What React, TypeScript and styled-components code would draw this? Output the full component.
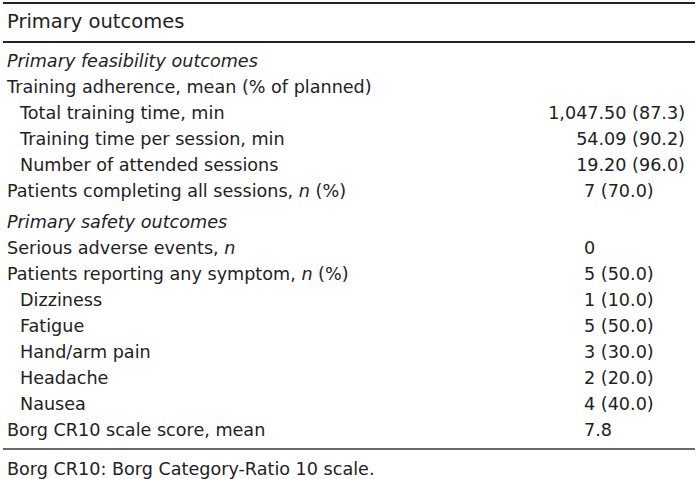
import React from "react";
import styled, { createGlobalStyle } from "styled-components";

const Global = createGlobalStyle`
  html, body { margin: 0; padding: 0; background: #ffffff; }
  body { font-family: Verdana, "DejaVu Sans", sans-serif; color: #222222; }
`;

const Table = styled.div`
  width: 692px;
  margin: 2px 0 0 3px;
  border-top: 2px solid #222222;
  font-size: 17.6px;
`;

const Header = styled.div`
  padding: 5px 0 6px 4px;
  font-size: 19.5px;
  line-height: 26px;
  border-bottom: 2px solid #222222;
`;

const Section = styled.div`
  padding-top: 5px;
`;

const Body = styled.div`
  padding-bottom: 5px;
  border-bottom: 2px solid #6a6a6a;
`;

const Row = styled.div`
  display: grid;
  grid-template-columns: 1fr 170px;
  padding-right: 10px;
  line-height: 26px;
  white-space: nowrap;
`;

const Label = styled.div<{ $indent?: boolean; $title?: boolean }>`
  padding-left: ${(p) => (p.$indent ? 17 : 4)}px;
  font-style: ${(p) => (p.$title ? "italic" : "normal")};
`;

const Value = styled.div<{ $right?: boolean }>`
  text-align: ${(p) => (p.$right ? "right" : "left")};
  padding-left: ${(p) => (p.$right ? 0 : 69)}px;
`;

const Footnote = styled.div`
  padding: 6px 0 0 4px;
  line-height: 26px;
`;

type R = { label: React.ReactNode; value?: string; indent?: boolean; right?: boolean };

const feas: R[] = [
  { label: "Training adherence, mean (% of planned)" },
  { label: "Total training time, min", value: "1,047.50 (87.3)", indent: true, right: true },
  { label: "Training time per session, min", value: "54.09 (90.2)", indent: true, right: true },
  { label: "Number of attended sessions", value: "19.20 (96.0)", indent: true, right: true },
  { label: <>Patients completing all sessions, <i>n</i> (%)</>, value: "7 (70.0)" },
];

const safety: R[] = [
  { label: <>Serious adverse events, <i>n</i></>, value: "0" },
  { label: <>Patients reporting any symptom, <i>n</i> (%)</>, value: "5 (50.0)" },
  { label: "Dizziness", value: "1 (10.0)", indent: true },
  { label: "Fatigue", value: "5 (50.0)", indent: true },
  { label: "Hand/arm pain", value: "3 (30.0)", indent: true },
  { label: "Headache", value: "2 (20.0)", indent: true },
  { label: "Nausea", value: "4 (40.0)", indent: true },
  { label: "Borg CR10 scale score, mean", value: "7.8" },
];

function Rows({ rows }: { rows: R[] }) {
  return (
    <>
      {rows.map((r, i) => (
        <Row key={i}>
          <Label $indent={r.indent}>{r.label}</Label>
          <Value $right={r.right}>{r.value ?? ""}</Value>
        </Row>
      ))}
    </>
  );
}

export default function App() {
  return (
    <>
      <Global />
      <Table>
        <Header>Primary outcomes</Header>
        <Body>
          <Section>
            <Row>
              <Label $title>Primary feasibility outcomes</Label>
              <Value />
            </Row>
            <Rows rows={feas} />
          </Section>
          <Section>
            <Row>
              <Label $title>Primary safety outcomes</Label>
              <Value />
            </Row>
            <Rows rows={safety} />
          </Section>
        </Body>
        <Footnote>Borg CR10: Borg Category-Ratio 10 scale.</Footnote>
      </Table>
    </>
  );
}
